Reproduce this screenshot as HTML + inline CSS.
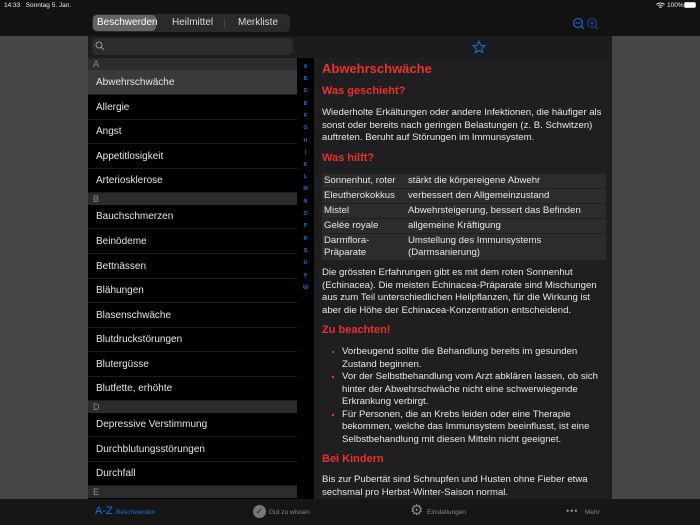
<!DOCTYPE html>
<html><head><meta charset="utf-8"><style>
*{margin:0;padding:0;box-sizing:border-box}
body{width:700px;height:525px;overflow:hidden;background:#121212;font-family:"Liberation Sans",sans-serif;position:relative;color:#e8e8e8}
.abs{position:absolute}
.gray{background:#464646}
.seg{left:92px;top:14px;width:198px;height:18px;background:#2a2a2c;border-radius:5px;font-size:10px;color:#ddd}
.seg span{position:absolute;top:3px}
.list{left:88px;top:58px;width:209px;height:441px;background:#000;overflow:hidden}
.hd{position:absolute;left:0;width:209px;height:12px;background:#2c2c2e;color:#8a8a8e;font-size:9px;padding-left:5px;line-height:12px}
.row{position:absolute;left:0;width:209px;font-size:10px;color:#e6e6e6;padding-left:8px;border-bottom:1px solid #1c1c1e}
.idx{left:297px;top:58px;width:17px;height:441px;background:#000}
.idx div{position:absolute;left:0;width:17px;text-align:center;font-size:5.5px;font-weight:bold;color:#1a6fe0}
.content{left:314px;top:58px;width:298px;height:441px;background:#1f1f21;overflow:hidden;font-size:9.6px;line-height:12.5px}
.content .h{position:absolute;left:8px;color:#e8322c;font-weight:bold}
.content p{position:absolute;left:8px;width:288px}
table{position:absolute;left:8px;top:115px;width:284px;border-collapse:separate;border-spacing:0 1.5px;font-size:9.6px;line-height:12px}
td{background:#2c2c2e;padding:1px 2px;vertical-align:top}
ul{position:absolute;left:18px;width:280px;list-style:none}
li{position:relative;padding-left:10px}
li:before{content:"";position:absolute;left:0;top:5px;width:2px;height:2px;background:#e8322c}
.tab{position:absolute;top:503px;font-size:6.5px;color:#888}
</style></head><body>
<div class="abs" style="left:4px;top:2px;font-size:6.5px;color:#eee">14:33&nbsp;&nbsp;&nbsp;Sonntag 5. Jan.</div>
<div class="abs" style="left:667px;top:2px;font-size:6.5px;color:#eee">100%</div>
<div class="abs" style="left:684px;top:2px;width:12px;height:6px;border:1px solid #ccc;border-radius:2px;background:#fff"></div>
<svg class="abs" style="left:656px;top:2px" width="9" height="7" viewBox="0 0 9 7"><path d="M0.5 2.5 A6 6 0 0 1 8.5 2.5 M2 4 A4 4 0 0 1 7 4 M3.3 5.5 A2 2 0 0 1 5.7 5.5" stroke="#ddd" fill="none" stroke-width="1"/></svg>
<div class="abs gray" style="left:0;top:36px;width:88px;height:463px"></div>
<div class="abs gray" style="left:612px;top:36px;width:88px;height:463px"></div>
<div class="abs" style="left:88px;top:36px;width:524px;height:22px;background:#1c1c1e"></div>
<div class="abs seg"><div class="abs" style="left:1px;top:1px;width:63px;height:16px;background:#636366;border-radius:4px"></div><span style="left:5px;color:#fff">Beschwerden</span><span style="left:80px">Heilmittel</span><span style="left:146px">Merkliste</span><div class="abs" style="left:132px;top:4px;width:1px;height:10px;background:#444"></div></div>
<div class="abs" style="left:92px;top:38px;width:201px;height:17px;background:#2c2c2e;border-radius:5px"></div>
<svg class="abs" style="left:95px;top:41px" width="10" height="10"><circle cx="4" cy="4" r="3" stroke="#999" fill="none"/><path d="M6.2 6.2 L9 9" stroke="#999"/></svg>
<svg class="abs" style="left:472px;top:40px" width="14" height="14" viewBox="0 0 24 24"><path d="M12 2l3 7 7 .6-5.3 4.7 1.6 7.2L12 17.8 5.7 21.5l1.6-7.2L2 9.6 9 9z" fill="none" stroke="#1a6fe0" stroke-width="1.8"/></svg>
<svg class="abs" style="left:572px;top:17px" width="30" height="14"><circle cx="6" cy="6" r="4.5" stroke="#1a5fc0" fill="none" stroke-width="1.3"/><path d="M9.5 9.5L12 12M3.5 6h5" stroke="#1a5fc0" stroke-width="1.3"/><circle cx="20" cy="6" r="4.5" stroke="#163f7a" fill="none" stroke-width="1.3"/><path d="M23.5 9.5L26 12M17.5 6h5M20 3.5v5" stroke="#163f7a" stroke-width="1.3"/></svg>
<div class="abs list">
<div class="hd" style="top:0">A</div>
<div class="row" style="top:12px;height:25px;line-height:25px;background:#3a3a3c">Abwehrschwäche</div>
<div class="row" style="top:37px;height:25px;line-height:25px">Allergie</div>
<div class="row" style="top:61px;height:25px;line-height:25px">Angst</div>
<div class="row" style="top:86px;height:25px;line-height:25px">Appetitlosigkeit</div>
<div class="row" style="top:111px;height:24px;line-height:24px">Arteriosklerose</div>
<div class="hd" style="top:135px">B</div>
<div class="row" style="top:146px;height:25px;line-height:25px">Bauchschmerzen</div>
<div class="row" style="top:171px;height:25px;line-height:25px">Beinödeme</div>
<div class="row" style="top:196px;height:25px;line-height:25px">Bettnässen</div>
<div class="row" style="top:220px;height:25px;line-height:25px">Blähungen</div>
<div class="row" style="top:245px;height:25px;line-height:25px">Blasenschwäche</div>
<div class="row" style="top:269px;height:25px;line-height:25px">Blutdruckstörungen</div>
<div class="row" style="top:294px;height:25px;line-height:25px">Blutergüsse</div>
<div class="row" style="top:318px;height:25px;line-height:25px">Blutfette, erhöhte</div>
<div class="hd" style="top:343px">D</div>
<div class="row" style="top:354px;height:25px;line-height:25px">Depressive Verstimmung</div>
<div class="row" style="top:379px;height:25px;line-height:25px">Durchblutungsstörungen</div>
<div class="row" style="top:403px;height:25px;line-height:25px">Durchfall</div>
<div class="hd" style="top:428px">E</div>
</div>
<div class="abs idx">
<div style="top:6px">A</div><div style="top:18px">B</div><div style="top:30px">D</div><div style="top:43px">E</div><div style="top:55px">F</div><div style="top:67px">G</div><div style="top:80px">H</div><div style="top:92px">I</div><div style="top:104px">K</div><div style="top:116px">L</div><div style="top:128px">M</div><div style="top:141px">N</div><div style="top:153px">O</div><div style="top:165px">P</div><div style="top:178px">R</div><div style="top:190px">S</div><div style="top:202px">U</div><div style="top:215px">V</div><div style="top:227px">W</div>
</div>
<div class="abs content">
<div class="h" style="top:5px;font-size:13px">Abwehrschwäche</div>
<div class="h" style="top:27px;font-size:11px">Was geschieht?</div>
<p style="top:49px">Wiederholte Erkältungen oder andere Infektionen, die häufiger als sonst oder bereits nach geringen Belastungen (z. B. Schwitzen) auftreten. Beruht auf Störungen im Immunsystem.</p>
<div class="h" style="top:94px;font-size:11px">Was hilft?</div>
<table>
<tr><td style="width:84px">Sonnenhut, roter</td><td>stärkt die körpereigene Abwehr</td></tr>
<tr><td>Eleutherokokkus</td><td>verbessert den Allgemeinzustand</td></tr>
<tr><td>Mistel</td><td>Abwehrsteigerung, bessert das Befinden</td></tr>
<tr><td>Gelée royale</td><td>allgemeine Kräftigung</td></tr>
<tr><td>Darmflora-<br>Präparate</td><td>Umstellung des Immunsystems<br>(Darmsanierung)</td></tr>
</table>
<p style="top:209px">Die grössten Erfahrungen gibt es mit dem roten Sonnenhut (Echinacea). Die meisten Echinacea-Präparate sind Mischungen aus zum Teil unterschiedlichen Heilpflanzen, für die Wirkung ist aber die Höhe der Echinacea-Konzentration entscheidend.</p>
<div class="h" style="top:266px;font-size:11px">Zu beachten!</div>
<ul style="top:288px">
<li>Vorbeugend sollte die Behandlung bereits im gesunden Zustand beginnen.</li>
<li>Vor der Selbstbehandlung vom Arzt abklären lassen, ob sich hinter der Abwehrschwäche nicht eine schwerwiegende Erkrankung verbirgt.</li>
<li>Für Personen, die an Krebs leiden oder eine Therapie bekommen, welche das Immunsystem beeinflusst, ist eine Selbstbehandlung mit diesen Mitteln nicht geeignet.</li>
</ul>
<div class="h" style="top:395px;font-size:11px">Bei Kindern</div>
<p style="top:416px">Bis zur Pubertät sind Schnupfen und Husten ohne Fieber etwa sechsmal pro Herbst-Winter-Saison normal.</p>
</div>
<div class="abs" style="left:0;top:499px;width:700px;height:26px;background:#161616"></div>
<div class="abs" style="left:95px;top:505px;font-size:11px;color:#1a6fe0">A-Z</div>
<div class="tab" style="left:116px;top:509px;color:#1a6fe0">Beschwerden</div>
<div class="abs" style="left:253px;top:505px;width:13px;height:13px;border-radius:50%;background:#777;color:#222;font-size:9px;text-align:center;line-height:13px">✓</div>
<div class="tab" style="left:269px;top:509px">Gut zu wissen</div>
<div class="abs" style="left:410px;top:503px;font-size:15px;color:#888;line-height:15px">⚙</div>
<div class="tab" style="left:427px;top:509px">Einstellungen</div>
<div class="tab" style="left:566px;top:506px;font-size:9px;letter-spacing:1px">•••</div>
<div class="tab" style="left:585px;top:509px">Mehr</div>
</body></html>
